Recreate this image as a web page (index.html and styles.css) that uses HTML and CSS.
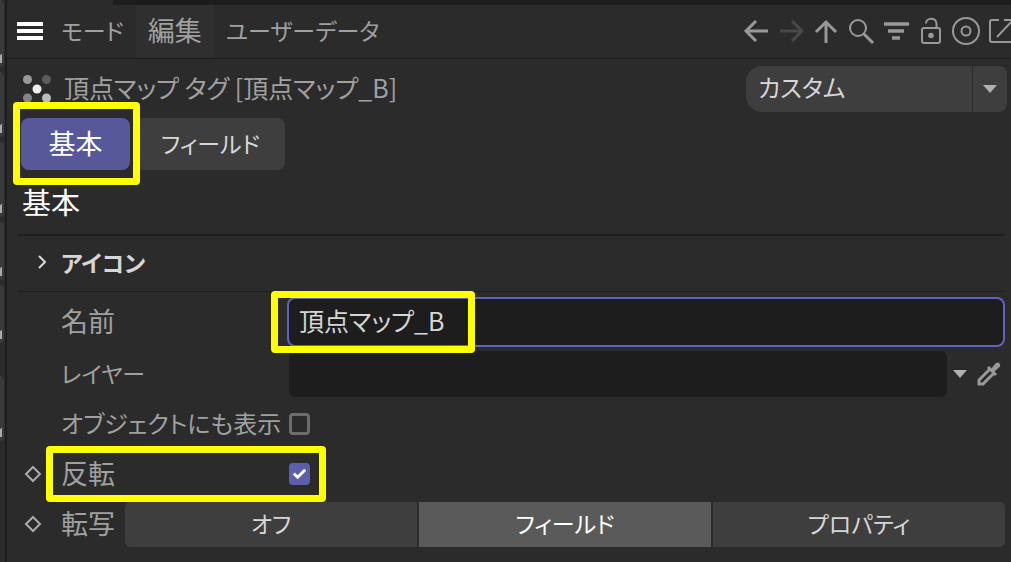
FILE: index.html
```
<!doctype html>
<html lang="ja">
<head>
    <meta charset="utf-8">
    <title>属性マネージャ</title>
    <link rel="stylesheet" href="styles.css">
</head>
<body>
<div class="dock">
    <i class="dock-item h1"></i>
    <i class="dock-item h2"></i>
    <i class="dock-item h3"></i>
    <i class="dock-item h4"></i>
    <i class="dock-item h5"></i>
    <i class="dock-item h6"></i>
</div>
<main class="panel">
    <div class="topline"></div>

    <!-- メニューバー -->
    <header class="menubar">
        <button class="burger" type="button" aria-label="メニュー"><i></i><i></i><i></i></button>
        <nav class="menu">
            <button type="button" class="kana">モード</button>
            <button type="button" class="hover">編集</button>
            <button type="button" class="kana">ユーザーデータ</button>
        </nav>
        <div class="tools">
            <button type="button" aria-label="戻る"><svg viewBox="0 0 35 36"><path d="M29 18H8M17 8L7 18l10 10" stroke-width="3"/></svg></button>
            <button type="button" aria-label="進む" class="off"><svg viewBox="0 0 35 36"><path d="M6 18h21M18 8l10 10-10 10" stroke-width="3"/></svg></button>
            <button type="button" aria-label="上へ"><svg viewBox="0 0 35 36"><path d="M17 30V9M7 19l10-10 10 10" stroke-width="3"/></svg></button>
            <button type="button" aria-label="検索"><svg viewBox="0 0 35 36"><circle cx="14" cy="15" r="8"/><path d="M20 21l9 9" stroke-width="3"/></svg></button>
            <button type="button" aria-label="フィルタ"><svg viewBox="0 0 35 36"><path d="M5 11h25M9 18h16M13 25h8" stroke-width="3.500"/></svg></button>
            <button type="button" aria-label="ロック"><svg viewBox="0 0 35 36"><rect x="8" y="15" width="18" height="15" rx="2"/><path d="M12 10.500c0-6 10-6.500 10.500 0V15"/><circle cx="17" cy="22.500" r="2.800" class="fill"/></svg></button>
            <button type="button" aria-label="ターゲット"><svg viewBox="0 0 35 36"><circle cx="17" cy="18" r="13"/><circle cx="17" cy="18" r="4.500"/></svg></button>
            <button type="button" aria-label="新規ウインドウ"><svg viewBox="0 0 35 36"><path d="M15 7H8a2 2 0 0 0-2 2v18a2 2 0 0 0 2 2h20V20M13 24L29 7M20 7h9v9"/></svg></button>
        </div>
    </header>

    <!-- タイトル -->
    <div class="titlebar">
        <svg class="tagicon" viewBox="0 0 28 28">
            <circle cx="4.500" cy="4.500" r="4.500" fill="#999"/>
            <circle cx="23.500" cy="4.500" r="4.500" fill="#5c5c5c"/>
            <circle cx="14" cy="14" r="4.500" fill="#eee"/>
            <circle cx="4.500" cy="23" r="4.500" fill="#858585"/>
            <circle cx="23.500" cy="23" r="4.500" fill="#bdbdbd"/>
        </svg>
        <span class="title">頂点マップ タグ [頂点マップ_B]</span>
        <div class="preset">
            <select aria-label="プリセット"><option>カスタム</option></select>
            <i class="preset-arrow"><svg class="tri" viewBox="0 0 14 8"><path d="M0 0h14L7 8z"/></svg></i>
        </div>
    </div>

    <div class="tabs">
        <div class="mark mark-tab"><button type="button" class="tab on">基本</button></div>
        <button type="button" class="tab tab2 kana">フィールド</button>
    </div>

    <h2 class="heading">基本</h2>

    <button type="button" class="section kana">
        <svg viewBox="0 0 8 14"><path d="M1 1l6 6-6 6"/></svg>アイコン
    </button>

    <!-- 属性 -->
    <form class="attrs">
        <div class="row row-name">
            <label class="label" for="ID_Name">名前</label>
            <div class="mark mark-name"><input id="ID_Name" class="field" type="text" value="頂点マップ_B"></div>
        </div>
        <div class="row row-layer">
            <label class="label kana" for="ID_Layer">レイヤー</label>
            <input id="ID_Layer" class="layer" type="text">
            <button type="button" class="mini" aria-label="レイヤー選択"><svg class="tri" viewBox="0 0 14 8"><path d="M0 0h14L7 8z"/></svg></button>
            <button type="button" class="mini" aria-label="スポイト"><svg class="picker" viewBox="0 0 24 24"><path d="M13.500 6.500L2 18v4h4L17.500 10.500"/><path d="M11 5l8 8" /><path class="fill" d="M14 7l4.500-5.500c3-3 6 1 4 3.500L17 10z"/></svg></button>
        </div>
        <div class="row">
            <label class="label mixed" for="ID_Show">オブジェクトにも表示</label>
            <input id="ID_Show" class="check" type="checkbox">
        </div>
        <div class="row">
            <svg class="key" viewBox="0 0 18 18"><path d="M9 2l7 7-7 7-7-7z"/></svg>
            <div class="mark mark-invert">
                <label class="label" for="ID_Invert">反転</label>
                <span class="checkbox">
                    <input id="ID_Invert" class="check" type="checkbox" checked>
                    <svg viewBox="0 0 22 22"><path d="M5 11l4 4 8-8"/></svg>
                </span>
            </div>
        </div>
        <div class="row row-mode">
            <svg class="key" viewBox="0 0 18 18"><path d="M9 2l7 7-7 7-7-7z"/></svg>
            <span class="label short" id="ID_Mode">転写</span>
            <div class="segments" role="group" aria-labelledby="ID_Mode">
                <button type="button" class="kana">オフ</button>
                <button type="button" class="kana on">フィールド</button>
                <button type="button" class="kana">プロパティ</button>
            </div>
        </div>
    </form>
</main>
</body>
</html>
```

FILE: styles.css
```
*,*::after{box-sizing:border-box;}
body{margin:0; display:flex; min-height:100vh; overflow:hidden; background:#2b2b2b; color:#a0a0a0;
    font-family:"Noto Sans CJK JP",sans-serif; font-weight:400; font-size:27px; line-height:40px; font-feature-settings:"palt";}
button,input,select{margin:0; padding:0; border:0; background:none; color:inherit; font:inherit; font-feature-settings:inherit;}
svg{display:block; fill:none; stroke:#999; stroke-width:2;}
svg .fill{fill:#999; stroke:none;}
.kana{font-size:23px;}
.mixed{font-size:24px;}

/* 左端のドック */
.dock{flex:none; width:7px; border-right:2px solid #1e1e1e; background:#2b2b2b;}
.dock-item{display:flex; align-items:flex-end; justify-content:flex-end; width:4px; margin-bottom:5px; padding:0 2px 4px 0; border-radius:0 4px 4px 0; background:#3a3a3a;}
.dock-item::after{content:""; flex:none; width:2px; height:9px; background:#aaa; border-radius:2px 0 0 0;}
.h1{height:67px;}
.h2{height:65px;}
.h3{height:75px;}
.h4{height:58px;}
.h5{height:58px; margin-bottom:33px;}
.h6{height:65px;}

.panel{flex:1; min-width:0; overflow:hidden;}
.topline{height:5px; margin-left:106px; background:#1c1c1c;}

.menubar{display:flex; align-items:stretch; height:54px; border-bottom:1px solid #1c1c1c;}
.burger{display:flex; flex-direction:column; justify-content:center; gap:3px; margin-left:10px; padding-bottom:2px;}
.burger i{width:26px; height:4px; background:#fff;}
.menu{display:flex; margin-left:6px;}
.menu button{padding:0 12px 4px; white-space:nowrap;}
.menu .hover{background:#2f2f2f;}
.tools{display:flex; align-items:center; margin:0 -8px 0 auto; padding-bottom:2px;}
.tools svg{width:35px; height:36px;}
.tools .off svg{stroke:#484848;}

.titlebar{display:flex; align-items:center; height:59px; padding:0 4px 0 16px;}
.tagicon{width:28px; height:28px; stroke:none;}
.title{margin-left:13px; padding-bottom:4px; font-size:25px;}
.preset{position:relative; width:261px; margin-left:auto;}
.preset select{display:block; width:100%; height:46px; padding:0 48px 4px 12px; appearance:none; border-radius:16px 8px 8px 16px; background:#3e3e3e; color:#d6d6d6; font-size:24px;}
.preset-arrow{position:absolute; top:0; right:0; display:flex; align-items:center; justify-content:center; width:35px; height:46px; border-left:1px solid #2b2b2b; pointer-events:none;}
.tri{width:14px; height:8px; fill:#b0b0b0; stroke:none;}

.tabs{display:flex; height:52px; padding-left:14px;}
.tab{height:52px; padding:0 27px 2px; border-radius:8px; background:#3e3e3e; color:#d6d6d6;}
.tab.on{min-width:109px; background:#56589a; color:#fff;}
.tab2{margin-left:6px; padding:0 25px 2px;}

/* 黄色の囲み */
.mark{position:relative;}
.mark::after{content:""; position:absolute; border:7px solid #ff0; border-radius:4px; pointer-events:none;}
.mark-tab::after{inset:-16px -10px -15px -8px;}
.mark-name::after{top:-6px; bottom:-6px; left:-16px; width:204px;}
.mark-invert::after{inset:-3px -16px -3px -15px;}

.heading{margin:0; padding:9px 0 11px 15px; color:#fff; font-size:29px; font-weight:400; line-height:44px;}
.section{display:flex; align-items:center; gap:15px; width:calc(100% - 17px); height:58px; margin-left:11px; padding:0 0 4px 20px;
    border-top:2px solid #1e1e1e; border-bottom:1px solid #1e1e1e; color:#d6d6d6; font-weight:700;}
.section svg{width:8px; height:14px; stroke:#d6d6d6;}

.attrs{padding:5px 6px 0 54px;}
.row{display:flex; align-items:center; height:50px;}
.label{flex:none; width:228px; padding-bottom:3px; white-space:nowrap;}
.row-name .label{width:226px;}
.mark-name{flex:1;}
.field{display:block; width:100%; height:50px; padding:0 10px 4px; border:2px solid #5f63bd; border-radius:8px; background:#1d1d1d; color:#d6d6d6; font-size:25px; outline:0;}
.row-layer{height:52px; padding-top:2px;}
.layer{flex:1; min-width:0; height:46px; border-radius:6px; background:#1d1d1d;}
.mini{display:flex; align-items:center; justify-content:center; width:26px; height:46px;}
.mini + .mini{width:32px;}
.picker{width:24px; height:24px; stroke-width:3;}
.key{flex:none; width:18px; height:18px; margin:0 19px 0 -37px; stroke:#aaa;}
.check{display:block; appearance:none; width:21px; height:22px; border:3px solid #6c6c6c; border-radius:4px;}
.check:checked{border:0; background:#5d5fab;}
.mark-invert{display:flex; align-items:center; height:50px;}
.checkbox{position:relative;}
.checkbox svg{position:absolute; inset:0; stroke:#fff; stroke-width:3; pointer-events:none;}
.label.short{width:64px;}
.segments{flex:1; display:flex; gap:2px;}
.segments button{flex:1; height:45px; padding-bottom:2px; background:#3e3e3e; color:#d6d6d6;}
.segments button:first-child{border-radius:5px 0 0 5px;}
.segments button:last-child{border-radius:0 5px 5px 0;}
.segments .on{background:#5a5a5a; color:#fff;}
```
